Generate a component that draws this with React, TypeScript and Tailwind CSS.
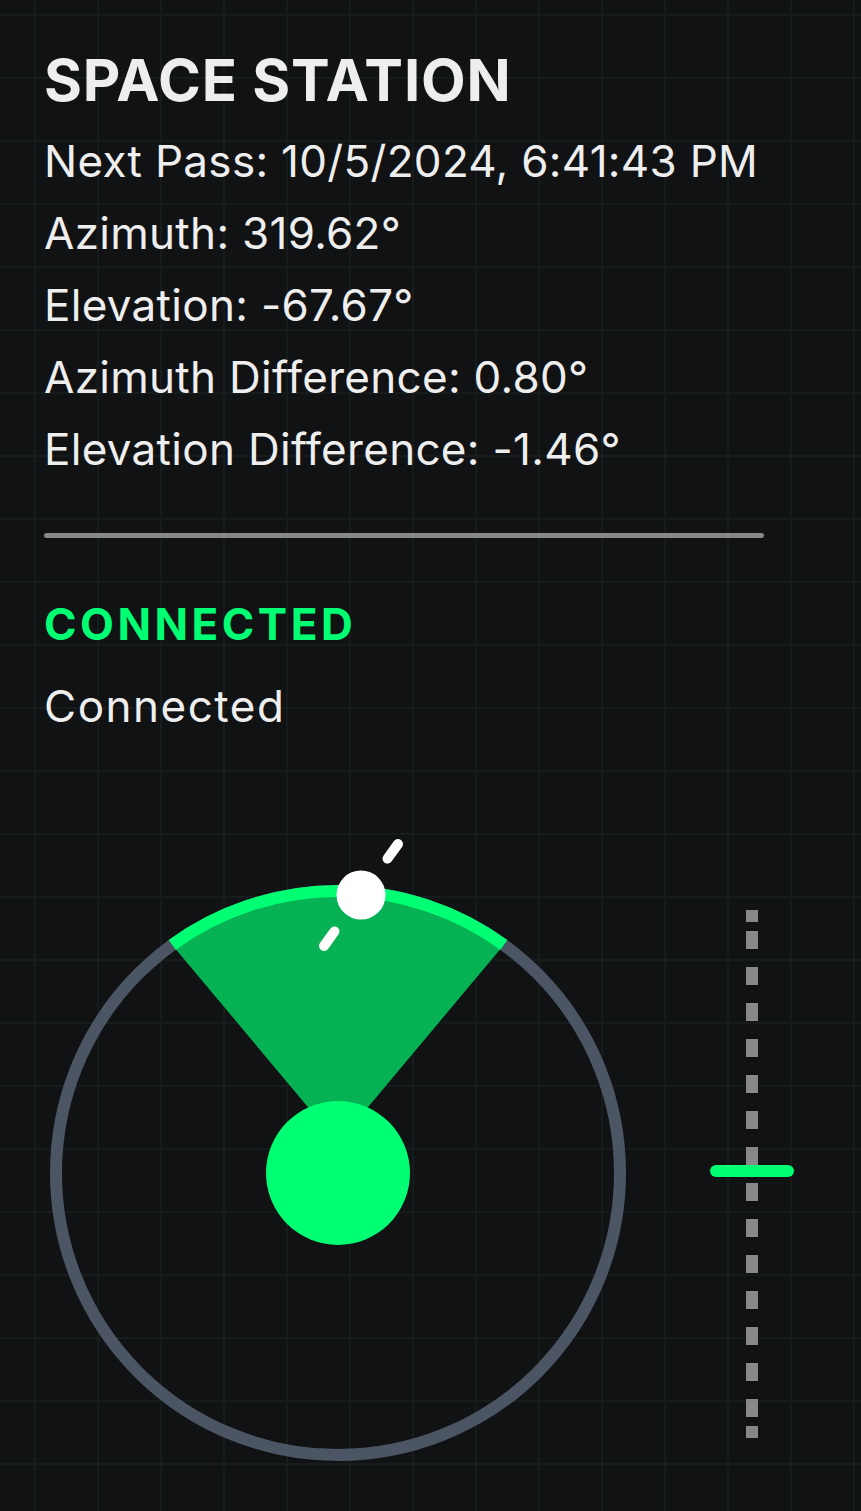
import React from 'react';

const lines = [
    'Next Pass: 10/5/2024, 6:41:43 PM',
    'Azimuth: 319.62°',
    'Elevation: -67.67°',
    'Azimuth Difference: 0.80°',
    'Elevation Difference: -1.46°',
];

const Radar = () => {
    const cx = 294;
    const cy = 343;
    return (
        <svg width="600" height="660" viewBox="0 0 600 660" className="shrink-0">
            <circle cx={cx} cy={cy} r="282" fill="none" stroke="#4b5563" strokeWidth="12" />
            {/* beam */}
            <path d={`M${cx},313 L128.2,114.9 A282,282 0 0 1 459.8,114.9 Z`} fill="#06b254" />
            <path d="M128.2,114.9 A282,282 0 0 1 459.8,114.9" fill="none" stroke="#00ff73" strokeWidth="12" />
            <circle cx={cx} cy={cy} r="72" fill="#00ff73" />
            {/* satellite */}
            <line x1="343.5" y1="28.6" x2="354" y2="14" stroke="#fff" strokeWidth="10" strokeLinecap="round" />
            <line x1="290.5" y1="101.4" x2="280" y2="116" stroke="#fff" strokeWidth="10" strokeLinecap="round" />
            <circle cx="317" cy="65" r="24.5" fill="#fff" />
        </svg>
    );
};

const Gauge = () => {
    const dashes = Array.from({ length: 14 });
    return (
        <div className="relative mt-[80px] ml-[66px] flex h-[528px] w-[84px] flex-col items-center">
            <div className="h-[12px] w-[12px] bg-[#888888]" />
            <div className="mt-[9px] flex flex-col gap-[18px]">
                {dashes.map((_, i) => (
                    <div key={i} className="h-[18px] w-[12px] bg-[#888888]" />
                ))}
            </div>
            <div className="mt-[9px] h-[12px] w-[12px] bg-[#888888]" />
            <div className="absolute left-0 top-[255px] h-[12px] w-[84px] rounded-full bg-[#00ff73]" />
        </div>
    );
};

export default function App() {
    return (
        <div
            className="min-h-screen bg-[#111214] bg-[linear-gradient(to_right,#161c1c_2px,transparent_2px),linear-gradient(to_bottom,#161c1c_2px,transparent_2px)] bg-[size:63px_63px] bg-[position:34px_14px] px-[44px] pt-[44px] text-[#eeeeee] overflow-hidden"
            style={{ fontFamily: 'Inter, "Liberation Sans", sans-serif' }}
        >
            <h1 className="text-[58px] leading-[72px] font-bold tracking-[0.8px]">SPACE STATION</h1>
            <div className="mt-[9px]">
                {lines.map((t) => (
                    <p key={t} className="text-[44px] leading-[72px] tracking-[0.3px]">{t}</p>
                ))}
            </div>
            <div className="mt-[48px] h-[5px] w-[720px] rounded-full bg-[#888888]" />
            <p className="mt-[50px] text-[44px] leading-[72px] font-bold tracking-[3.5px] text-[#00ff73]">CONNECTED</p>
            <p className="mt-[10px] text-[44px] leading-[72px] tracking-[1.5px]">Connected</p>
            <div className="mt-[88px] flex items-start">
                <Radar />
                <Gauge />
            </div>
        </div>
    );
}
